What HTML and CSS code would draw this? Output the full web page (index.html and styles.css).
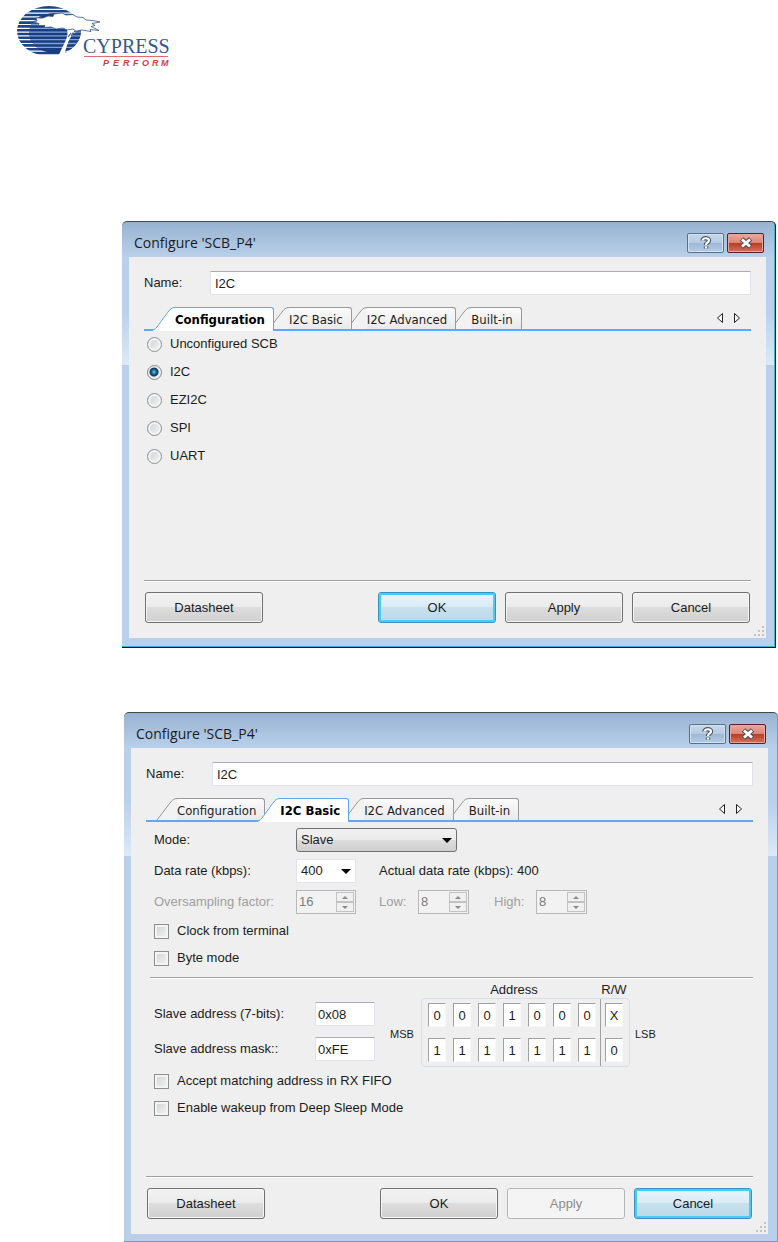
FILE: index.html
```html
<!DOCTYPE html>
<html lang="en">
<head>
    <meta charset="UTF-8">
    <meta name="viewport" content="width=device-width, initial-scale=1.0">
    <title>Configure 'SCB_P4'</title>
    <link rel="stylesheet" href="styles.css">
</head>
<body>
    <header class="page-header">
        <svg class="logo" width="160" height="68" viewBox="0 0 160 68" role="img" aria-label="Cypress Perform">
            <defs>
                <clipPath id="globe"><ellipse cx="33" cy="31" rx="32" ry="25"/></clipPath>
            </defs>
            <g clip-path="url(#globe)">
                <path stroke="#1d4489" stroke-width="2.6" d="M0 7.4h70M0 11.2h70M0 15h70M0 18.8h70M0 22.6h70M0 26.4h70M0 30.2h70M0 34h70M0 37.8h70M0 41.6h70M0 45.4h70M0 49.2h70M0 53h70"/>
                <ellipse cx="39" cy="33" rx="26" ry="20" fill="#1a3c80"/>
                <path stroke="#7fa3d2" stroke-width="1.3" d="M19 20.7h40M15 24.5h48M14 28.3h50M13 32.1h52M13 35.9h51M14 39.7h50M17 43.5h44M21 47.3h36"/>
            </g>
            <path fill="#fff" d="M50 27C54 34 49 42 46 48L42 57H48C50 48 52 40 57 34L63 30V26z"/>
            <path fill="#fff" stroke="#35588f" stroke-width=".8" stroke-linejoin="round" d="M17 22L21 21L20 18L27 18L32 16L37 16.500L38 14L46 13L50 15L57 14.500L61 17L67 17.500L70 20L77 20.500L84 22L76 23.500L79 25.500L75 26.500L83 30.500L74 29.500L75 31.500L66 30L60 31L57 29L51 30L47 28L40 29L35 27L28 27.500L29 25.500L22 25.500L23 23.500z"/>
            <path fill="none" stroke="#35588f" stroke-width="1.1" d="M55 36l2-3 3 1M60 35l3-2M58 31.500l4 .5M55 33l-3 4"/>
            <text class="logo-name" x="67" y="53">CYPRESS</text>
            <path stroke="#dc6b72" d="M68 56.500h84"/>
            <text class="logo-tag" x="87 97 107 117 126 136 145" y="66">PERFORM</text>
        </svg>
    </header>

    <main>
        <section class="dialog dialog-first" aria-label="SCB configuration">
            <div class="title-bar">
                <h2>Configure 'SCB_P4'</h2>
                <div class="window-buttons">
                    <button type="button" class="win-btn" aria-label="Help">
                        <svg width="14" height="14" viewBox="0 0 14 14"><path fill="none" stroke="#4c5667" stroke-width="4.400" d="M3.500 4.500C3.500 1.500 10 1.500 10 4.500C10 6.500 7 6.500 7 9M7 10.500v2"/><path fill="none" stroke="#fff" stroke-width="2.200" d="M3.500 4.500C3.500 1.500 10 1.500 10 4.500C10 6.500 7 6.500 7 9M7 10.500v2"/></svg>
                    </button>
                    <button type="button" class="win-btn win-close" aria-label="Close">
                        <svg width="14" height="12" viewBox="0 0 14 12"><path stroke="#53505a" stroke-width="5" d="M2.500 2l9 8M11.500 2l-9 8"/><path stroke="#fff" stroke-width="2.800" d="M3 2.500l8 7M11 2.500l-8 7"/></svg>
                    </button>
                </div>
            </div>
            <form class="dialog-body">
                <div class="name-row">
                    <label for="name-1">Name:</label>
                    <input type="text" class="field" id="name-1" value="I2C">
                </div>
                <div class="tab-bar">
                    <div class="tabs" role="tablist">
                        <button type="button" class="tab active" role="tab" aria-selected="true"><svg width="24" height="24" viewBox="0 0 24 24"><path class="tab-fill" d="M0 24C3 24 4 22 6 20L17 5C19 2 21 .5 24 .5V24z"/><path class="tab-line" d="M0 23C3 23 4 22 6 20L17 5C19 2 21 .5 24 .5"/></svg><span>Configuration</span></button>
                        <button type="button" class="tab" role="tab"><svg width="24" height="24" viewBox="0 0 24 24"><path class="tab-fill" d="M0 22L6 20L17 5C19 2 21 .5 24 .5V22z"/><path class="tab-line" d="M4 22L17 5C19 2 21 .5 24 .5"/></svg><span>I2C Basic</span></button>
                        <button type="button" class="tab" role="tab"><svg width="24" height="24" viewBox="0 0 24 24"><path class="tab-fill" d="M0 22L6 20L17 5C19 2 21 .5 24 .5V22z"/><path class="tab-line" d="M4 22L17 5C19 2 21 .5 24 .5"/></svg><span>I2C Advanced</span></button>
                        <button type="button" class="tab" role="tab"><svg width="24" height="24" viewBox="0 0 24 24"><path class="tab-fill" d="M0 22L6 20L17 5C19 2 21 .5 24 .5V22z"/><path class="tab-line" d="M4 22L17 5C19 2 21 .5 24 .5"/></svg><span>Built-in</span></button>
                    </div>
                    <div class="tab-scroll">
                        <button type="button" aria-label="Scroll left"><svg width="8" height="12" viewBox="0 0 8 12"><path d="M6.500 1.500v9L1.500 6z"/></svg></button>
                        <button type="button" aria-label="Scroll right"><svg width="8" height="12" viewBox="0 0 8 12"><path d="M1.500 1.500v9L6.500 6z"/></svg></button>
                    </div>
                </div>
                <div class="panel radio-panel">
                    <label class="option"><input type="radio" name="mode">Unconfigured SCB</label>
                    <label class="option"><input type="radio" name="mode" checked>I2C</label>
                    <label class="option"><input type="radio" name="mode">EZI2C</label>
                    <label class="option"><input type="radio" name="mode">SPI</label>
                    <label class="option"><input type="radio" name="mode">UART</label>
                </div>
                <div class="footer">
                    <button type="button" class="btn btn-left">Datasheet</button>
                    <button type="button" class="btn btn-default">OK</button>
                    <button type="button" class="btn">Apply</button>
                    <button type="button" class="btn">Cancel</button>
                </div>
                <svg class="grip" width="10" height="10" viewBox="0 0 10 10"><path d="M8 0h2v2h-2zM4 4h2v2h-2zM8 4h2v2h-2zM0 8h2v2h-2zM4 8h2v2h-2zM8 8h2v2h-2z"/></svg>
            </form>
        </section>

        <section class="dialog dialog-second" aria-label="I2C basic settings">
            <div class="title-bar">
                <h2>Configure 'SCB_P4'</h2>
                <div class="window-buttons">
                    <button type="button" class="win-btn" aria-label="Help">
                        <svg width="14" height="14" viewBox="0 0 14 14"><path fill="none" stroke="#4c5667" stroke-width="4.400" d="M3.500 4.500C3.500 1.500 10 1.500 10 4.500C10 6.500 7 6.500 7 9M7 10.500v2"/><path fill="none" stroke="#fff" stroke-width="2.200" d="M3.500 4.500C3.500 1.500 10 1.500 10 4.500C10 6.500 7 6.500 7 9M7 10.500v2"/></svg>
                    </button>
                    <button type="button" class="win-btn win-close" aria-label="Close">
                        <svg width="14" height="12" viewBox="0 0 14 12"><path stroke="#53505a" stroke-width="5" d="M2.500 2l9 8M11.500 2l-9 8"/><path stroke="#fff" stroke-width="2.800" d="M3 2.500l8 7M11 2.500l-8 7"/></svg>
                    </button>
                </div>
            </div>
            <form class="dialog-body">
                <div class="name-row">
                    <label for="name-2">Name:</label>
                    <input type="text" class="field" id="name-2" value="I2C">
                </div>
                <div class="tab-bar">
                    <div class="tabs" role="tablist">
                        <button type="button" class="tab" role="tab"><svg width="24" height="24" viewBox="0 0 24 24"><path class="tab-fill" d="M4 22L17 5C19 2 21 .5 24 .5V22z"/><path class="tab-line" d="M4 22L17 5C19 2 21 .5 24 .5"/></svg><span>Configuration</span></button>
                        <button type="button" class="tab active" role="tab" aria-selected="true"><svg width="24" height="24" viewBox="0 0 24 24"><path class="tab-fill" d="M0 24C3 24 4 22 6 20L17 5C19 2 21 .5 24 .5V24z"/><path class="tab-line" d="M0 23C3 23 4 22 6 20L17 5C19 2 21 .5 24 .5"/></svg><span>I2C Basic</span></button>
                        <button type="button" class="tab" role="tab"><svg width="24" height="24" viewBox="0 0 24 24"><path class="tab-fill" d="M0 22L6 20L17 5C19 2 21 .5 24 .5V22z"/><path class="tab-line" d="M4 22L17 5C19 2 21 .5 24 .5"/></svg><span>I2C Advanced</span></button>
                        <button type="button" class="tab" role="tab"><svg width="24" height="24" viewBox="0 0 24 24"><path class="tab-fill" d="M0 22L6 20L17 5C19 2 21 .5 24 .5V22z"/><path class="tab-line" d="M4 22L17 5C19 2 21 .5 24 .5"/></svg><span>Built-in</span></button>
                    </div>
                    <div class="tab-scroll">
                        <button type="button" aria-label="Scroll left"><svg width="8" height="12" viewBox="0 0 8 12"><path d="M6.500 1.500v9L1.500 6z"/></svg></button>
                        <button type="button" aria-label="Scroll right"><svg width="8" height="12" viewBox="0 0 8 12"><path d="M1.500 1.500v9L6.500 6z"/></svg></button>
                    </div>
                </div>
                <div class="panel basic-panel">
                    <div class="settings">
                        <div class="row">
                            <label class="row-label" for="mode">Mode:</label>
                            <span class="select-wrap mode-select"><select id="mode"><option>Slave</option></select></span>
                        </div>
                        <div class="row">
                            <label class="row-label" for="rate">Data rate (kbps):</label>
                            <span class="select-wrap rate-select"><select id="rate"><option>400</option></select></span>
                            <span>Actual data rate (kbps): 400</span>
                        </div>
                        <div class="row disabled">
                            <label class="row-label" for="oversampling">Oversampling factor:</label>
                            <span class="spinner spinner-wide"><input type="text" id="oversampling" value="16" disabled><span class="steps"><button type="button" disabled aria-label="Up"></button><button type="button" disabled aria-label="Down"></button></span></span>
                            <label class="low-label" for="low">Low:</label>
                            <span class="spinner"><input type="text" id="low" value="8" disabled><span class="steps"><button type="button" disabled aria-label="Up"></button><button type="button" disabled aria-label="Down"></button></span></span>
                            <label class="high-label" for="high">High:</label>
                            <span class="spinner"><input type="text" id="high" value="8" disabled><span class="steps"><button type="button" disabled aria-label="Up"></button><button type="button" disabled aria-label="Down"></button></span></span>
                        </div>
                        <label class="option"><input type="checkbox">Clock from terminal</label>
                        <label class="option"><input type="checkbox">Byte mode</label>
                    </div>

                    <div class="address">
                        <div class="address-fields">
                            <label for="addr">Slave address (7-bits):</label>
                            <input type="text" class="field" id="addr" value="0x08">
                            <label for="mask">Slave address mask::</label>
                            <input type="text" class="field" id="mask" value="0xFE">
                        </div>
                        <span class="bit-label">MSB</span>
                        <div class="bits">
                            <div class="bits-head"><span>Address</span><span>R/W</span></div>
                            <div class="bits-box">
                                <div class="bit-group">
                                    <input type="text" value="0" aria-label="Address bit 7">
                                    <input type="text" value="0" aria-label="Address bit 6">
                                    <input type="text" value="0" aria-label="Address bit 5">
                                    <input type="text" value="1" aria-label="Address bit 4">
                                    <input type="text" value="0" aria-label="Address bit 3">
                                    <input type="text" value="0" aria-label="Address bit 2">
                                    <input type="text" value="0" aria-label="Address bit 1">
                                    <input type="text" value="1" aria-label="Mask bit 7">
                                    <input type="text" value="1" aria-label="Mask bit 6">
                                    <input type="text" value="1" aria-label="Mask bit 5">
                                    <input type="text" value="1" aria-label="Mask bit 4">
                                    <input type="text" value="1" aria-label="Mask bit 3">
                                    <input type="text" value="1" aria-label="Mask bit 2">
                                    <input type="text" value="1" aria-label="Mask bit 1">
                                </div>
                                <div class="bit-group bit-rw">
                                    <input type="text" value="X" aria-label="Read/write bit">
                                    <input type="text" value="0" aria-label="Read/write mask">
                                </div>
                            </div>
                        </div>
                        <span class="bit-label">LSB</span>
                    </div>

                    <div class="checks">
                        <label class="option"><input type="checkbox">Accept matching address in RX FIFO</label>
                        <label class="option"><input type="checkbox">Enable wakeup from Deep Sleep Mode</label>
                    </div>
                </div>
                <div class="footer">
                    <button type="button" class="btn btn-left">Datasheet</button>
                    <button type="button" class="btn">OK</button>
                    <button type="button" class="btn" disabled>Apply</button>
                    <button type="button" class="btn btn-default">Cancel</button>
                </div>
                <svg class="grip" width="10" height="10" viewBox="0 0 10 10"><path d="M8 0h2v2h-2zM4 4h2v2h-2zM8 4h2v2h-2zM0 8h2v2h-2zM4 8h2v2h-2zM8 8h2v2h-2z"/></svg>
            </form>
        </section>
    </main>
</body>
</html>
```

FILE: styles.css
```css
:root {
    --face: #efefef;
    --frame: #bad0ea;
    --text: #1c1c1c;
    --disabled: #a0a0a0;
    --tab-line: #5ba9fb;
    --cyan: #35b5d0;
}

* {
    box-sizing: border-box;
    margin: 0;
    padding: 0;
}

body {
    font-family: 'Liberation Sans', Arial, sans-serif;
    font-size: 13px;
    line-height: 16px;
    color: var(--text);
    background-color: #fff;
}

button,
input,
select {
    font: inherit;
    color: inherit;
}

svg {
    display: block;
}

.page-header {
    padding: 0 16px;
    margin-bottom: 153px;
}

.logo-name {
    font-family: 'Liberation Serif', 'Times New Roman', serif;
    font-size: 20px;
    fill: #35588f;
}

.logo-tag {
    font-size: 9px;
    font-style: italic;
    font-weight: bold;
    fill: #cf3f4b;
}

/* Window frame */
.dialog {
    border-top: 1px solid #3f4a4a;
    border-bottom: 1px solid #111;
    border-radius: 5px 5px 0 0;
    padding: 0 9px 9px 7px;
    background: linear-gradient(#98b3d1 0, #b8d0ea 35px, #bad1ec 90px, #dde9f6 143px, var(--frame) 143px);
    box-shadow: inset -1px -1px 0 var(--cyan);
}

.dialog-first {
    margin: 0 2px 64px 122px;
    border-right: 1px solid #111;
}

.dialog-second {
    margin-left: 124px;
    border-bottom: none;
    padding-right: 10px;
    padding-bottom: 8px;
}

.title-bar {
    height: 35px;
    display: flex;
    align-items: center;
    justify-content: space-between;
    padding: 6px 2px 0 5px;
}

.title-bar h2 {
    font-family: 'Open Sans', 'Noto Sans', sans-serif;
    font-size: 14px;
    font-weight: 400;
}

.window-buttons {
    display: flex;
    gap: 3px;
}

.win-btn {
    width: 37px;
    height: 20px;
    display: flex;
    align-items: center;
    justify-content: center;
    border: 1px solid #5b6f8b;
    border-radius: 2px;
    background: linear-gradient(#c5d7eb 0, #b6cbe3 50%, #9db7d5 50%, #b4cce6 100%);
    box-shadow: inset 0 0 0 1px #d3e1f1;
}

.win-close {
    border-color: #5a1f2a;
    background: linear-gradient(#e9aaa0 0, #dc8576 48%, #b93a22 50%, #d2745c 100%);
    box-shadow: inset 0 0 0 1px #e4a79c;
}

.dialog-body {
    position: relative;
    background-color: var(--face);
    padding: 14px 15px 15px;
}

.name-row {
    display: flex;
    align-items: center;
    margin-bottom: 12px;
}

.name-row label {
    width: 66px;
}

.name-row .field {
    flex: 1;
    min-width: 0;
}

.field {
    height: 24px;
    padding: 0 4px;
    border: 1px solid #e2e3ea;
    border-top-color: #abadb3;
    border-radius: 1px;
    background-color: #fff;
}

/* Tabs */
.tab-bar {
    display: flex;
    justify-content: space-between;
    height: 24px;
    border-bottom: 2px solid var(--tab-line);
}

.tabs {
    display: flex;
    padding-left: 7px;
}

.tab {
    position: relative;
    display: flex;
    height: 22px;
    border: none;
    background: none;
    margin-left: -9px;
    font-family: 'DejaVu Sans Condensed', 'DejaVu Sans', sans-serif;
    line-height: 21px;
}

.tab:nth-child(1) { margin-left: 0; z-index: 4; }
.tab:nth-child(2) { z-index: 3; }
.tab:nth-child(3) { z-index: 2; }
.tab:nth-child(4) { z-index: 1; }

.tab span {
    height: 22px;
    padding: 1px 8px 0 0;
    border-top: 1px solid #9a9a9a;
    border-right: 1px solid #9a9a9a;
    border-top-right-radius: 3px;
    background: linear-gradient(#fbfbfb, #e9e9e9);
}

.tab-fill {
    fill: #f2f2f2;
}

.tab-line {
    fill: none;
    stroke: #9a9a9a;
}

.tab.active {
    z-index: 5;
    height: 24px;
    font-weight: bold;
    color: #000;
}

.tab.active span {
    height: 24px;
    border-color: var(--tab-line);
    background: #fff;
}

.tab.active .tab-fill {
    fill: #fff;
}

.tab.active .tab-line {
    stroke: var(--tab-line);
}

.tab-scroll {
    display: flex;
    align-items: center;
    gap: 9px;
    padding-right: 10px;
}

.tab-scroll button {
    border: none;
    background: none;
}

.tab-scroll path {
    fill: #fff;
    stroke: #222;
}

/* Tick boxes and radios */
.option {
    display: flex;
    align-items: center;
    gap: 8px;
    height: 20px;
}

.option input {
    appearance: none;
    width: 15px;
    height: 15px;
    border: 1px solid #8e8f8f;
    background: linear-gradient(135deg, #cdd1d5, #f6f6f6);
    box-shadow: inset 0 0 0 2px #f4f4f4;
}

.option input[type="radio"] {
    border-radius: 50%;
}

.option input[type="radio"]:checked {
    border-color: #7c868e;
    background: radial-gradient(circle at 6px 6px, #7fd3f3 0, #1d6f9f 2px, #0f3250 4px, #e6eaec 5px);
    box-shadow: inset 0 0 0 1px #f4f4f4;
}

.radio-panel {
    display: flex;
    flex-direction: column;
    gap: 8px;
    min-height: 249px;
    padding: 3px;
}

.basic-panel {
    padding: 6px 0 58px;
}

.settings {
    display: flex;
    flex-direction: column;
    gap: 7px;
    padding: 0 8px;
}

.row {
    display: flex;
    align-items: center;
    height: 24px;
}

.row-label {
    width: 142px;
}

.disabled {
    color: var(--disabled);
}

.select-wrap {
    position: relative;
    height: 24px;
}

.select-wrap select {
    appearance: none;
    width: 100%;
    height: 24px;
    padding: 0 4px;
    border: 1px solid #707070;
    border-radius: 3px;
    background: linear-gradient(#f2f2f2 0, #ebebeb 50%, #dddddd 50%, #cfcfcf 100%);
}

.select-wrap::after {
    content: '';
    position: absolute;
    right: 5px;
    top: 10px;
    border: 5px solid transparent;
    border-top-color: #000;
    border-bottom: none;
    pointer-events: none;
}

.mode-select {
    width: 161px;
}

.rate-select {
    width: 60px;
    margin-right: 23px;
}

.rate-select select {
    border: 1px solid #e2e3ea;
    border-radius: 1px;
    background: #fff;
}

.spinner {
    display: flex;
    width: 51px;
    height: 24px;
    padding: 1px;
    border: 1px solid #b8b8b8;
    background-color: #f2f2f2;
}

.spinner-wide {
    width: 60px;
    margin-right: 23px;
}

.spinner input {
    flex: 1;
    min-width: 0;
    padding-left: 1px;
    border: none;
    background: none;
    color: #7d7d7d;
}

.steps {
    display: flex;
    flex-direction: column;
    width: 18px;
}

.steps button {
    flex: 1;
    display: flex;
    align-items: center;
    justify-content: center;
    border: 1px solid #c2c2c2;
    background-color: #f0f0f0;
}

.steps button::before {
    content: '';
    border: 3px solid transparent;
    border-top: none;
    border-bottom-color: #8a8a8a;
}

.steps button:last-child::before {
    border-top: 3px solid #8a8a8a;
    border-bottom: none;
}

.low-label {
    width: 39px;
}

.high-label {
    width: 67px;
    padding-left: 25px;
}

/* Address bits */
.address {
    display: flex;
    align-items: flex-start;
    margin: 9px 0 4px 4px;
    padding: 4px 0 0 4px;
    border-top: 1px solid #a0a0a0;
    box-shadow: inset 0 1px 0 #fff;
}

.address-fields {
    display: grid;
    grid-template-columns: 161px 60px;
    row-gap: 11px;
    align-items: center;
    padding-top: 20px;
    margin-right: 15px;
}

.address-fields .field {
    width: 60px;
    padding: 0 2px;
}

.bit-label {
    align-self: center;
    width: 31px;
    padding-top: 18px;
    font-size: 11px;
}

.bits {
    margin-right: 5px;
}

.bits-head {
    display: grid;
    grid-template-columns: 174px 28px;
    gap: 5px;
    text-align: center;
}

.bits-head span:first-child {
    padding-left: 12px;
}

.bits-box {
    display: flex;
    padding: 0 6px;
    border: 1px solid #d5dfe5;
    border-radius: 4px;
}

.bit-group {
    display: grid;
    grid-template-columns: repeat(7, 18px);
    gap: 11px 7px;
    padding: 4px 4px 4px 0;
}

.bit-rw {
    grid-template-columns: 18px;
    border-left: 1px solid #a0a0a0;
    padding: 4px 0 4px 4px;
}

.bit-group input {
    width: 18px;
    height: 24px;
    border: 1px solid #f8f8f8;
    border-top-color: #a0a0a0;
    border-left-color: #a0a0a0;
    background-color: #fff;
    text-align: center;
}

.checks {
    display: flex;
    flex-direction: column;
    gap: 7px;
    padding: 0 8px;
}

/* Bottom buttons */
.footer {
    display: flex;
    gap: 9px;
    padding: 11px 1px 0;
    border-top: 1px solid #a0a0a0;
    box-shadow: inset 0 1px 0 #fff;
}

.btn {
    width: 118px;
    height: 31px;
    border: 1px solid #707070;
    border-radius: 3px;
    background: linear-gradient(#f2f2f2 0, #ebebeb 48%, #dddddd 50%, #cfcfcf 100%);
    box-shadow: inset 0 0 0 1px #f6f6f6;
}

.btn-left {
    margin-right: auto;
}

.btn-default {
    border-color: #3c8fbe;
    background: linear-gradient(#eaf4fa 0, #d9ebf5 48%, #c6e0ee 50%, #bcd9e8 100%);
    box-shadow: inset 0 0 0 2px #46cdf5;
}

.btn:disabled {
    border-color: #b5b5b5;
    background: #f4f4f4;
    color: #8c8c8c;
}

.grip {
    position: absolute;
    right: 2px;
    bottom: 2px;
    fill: #c4c4c4;
}
```
